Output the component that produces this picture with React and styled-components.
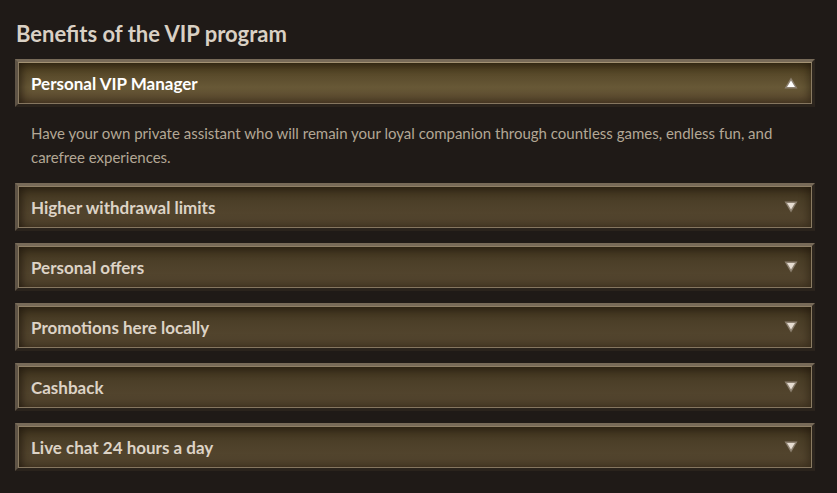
import React, { useState } from 'react';
import styled, { createGlobalStyle } from 'styled-components';

const GlobalStyle = createGlobalStyle`
  html, body {
    margin: 0;
    background: #1f1a17;
  }
  body {
    font-family: Lato, "Liberation Sans", sans-serif;
  }
`;

const Page = styled.div`
  padding: 21px 22px 20px 15px;
`;

const Title = styled.h2`
  margin: 0 0 12px 1px;
  font-size: 22px;
  line-height: 26px;
  font-weight: 700;
  color: #d9d0c4;
`;

const List = styled.div`
  display: flex;
  flex-direction: column;
  gap: 12px;
`;

const Frame = styled.div`
  border: 3px solid;
  border-color: #776a58 #2c251e #2a231c #5f5446;
  background: #2a231c;
`;

const Header = styled.button`
  display: flex;
  align-items: center;
  justify-content: space-between;
  width: 100%;
  height: 42px;
  padding: 0 13px 0 12px;
  border: 1px solid;
  border-color: ${p => (p.$open ? '#a39273' : '#8f7f65')} #8a7b62 #857660 #8a7b62;
  background: ${p =>
    p.$open
      ? 'linear-gradient(180deg, #4d3f1f 0%, #5e4f2f 40%, #675836 60%, #5d4b31 100%)'
      : 'linear-gradient(180deg, #42361f 0%, #4e412a 45%, #574831 100%)'};
  box-shadow: inset 6px 6px 10px -4px rgba(25, 18, 10, 0.75),
    inset -6px -6px 10px -4px rgba(30, 20, 10, 0.55);
  cursor: pointer;
  font-family: inherit;
  font-size: 17px;
  font-weight: 700;
  color: ${p => (p.$open ? '#ffffff' : '#ddd3c6')};
  text-align: left;
`;

const Body = styled.p`
  margin: 0;
  padding: 14px 40px 2px 16px;
  font-size: 15px;
  line-height: 24px;
  color: #b3a795;
`;

const Arrow = ({ up }) => (
  <svg width="14" height="12" viewBox="0 0 14 12" style={{ transform: up ? 'none' : 'rotate(180deg)' }}>
    <polygon points="7,0.5 13.5,11.5 0.5,11.5" fill="#8c8070" />
    <polygon points="7,3.5 11,10 3,10" fill={up ? '#ffffff' : '#e6ddd2'} />
  </svg>
);

const items = [
  {
    title: 'Personal VIP Manager',
    text: 'Have your own private assistant who will remain your loyal companion through countless games, endless fun, and carefree experiences.',
  },
  { title: 'Higher withdrawal limits', text: 'Withdraw larger amounts with fewer restrictions.' },
  { title: 'Personal offers', text: 'Bonuses and offers tailored just for you.' },
  { title: 'Promotions here locally', text: 'Exclusive local promotions for VIP members.' },
  { title: 'Cashback', text: 'Get a part of your losses back regularly.' },
  { title: 'Live chat 24 hours a day', text: 'Our support team is always available.' },
];

export default function App() {
  const [open, setOpen] = useState(0);
  return (
    <Page>
      <GlobalStyle />
      <Title>Benefits of the VIP program</Title>
      <List>
        {items.map((it, i) => (
          <div key={it.title}>
            <Frame>
              <Header $open={open === i} onClick={() => setOpen(open === i ? -1 : i)}>
                {it.title}
                <Arrow up={open === i} />
              </Header>
            </Frame>
            {open === i && <Body>{it.text}</Body>}
          </div>
        ))}
      </List>
    </Page>
  );
}
